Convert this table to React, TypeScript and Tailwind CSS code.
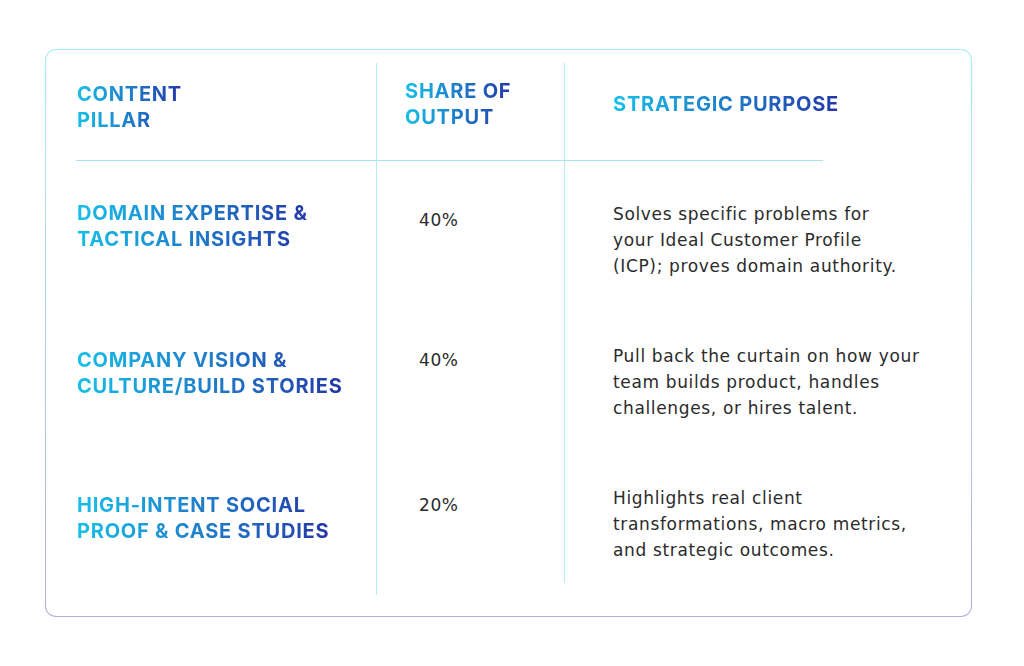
import React from "react";

const rows = [
  {
    pillar: ["DOMAIN EXPERTISE &", "TACTICAL INSIGHTS"],
    share: "40%",
    purpose: ["Solves specific problems for", "your Ideal Customer Profile", "(ICP); proves domain authority."],
  },
  {
    pillar: ["COMPANY VISION &", "CULTURE/BUILD STORIES"],
    share: "40%",
    purpose: ["Pull back the curtain on how your", "team builds product, handles", "challenges, or hires talent."],
  },
  {
    pillar: ["HIGH-INTENT SOCIAL", "PROOF & CASE STUDIES"],
    share: "20%",
    purpose: ["Highlights real client", "transformations, macro metrics,", "and strategic outcomes."],
  },
];

const body = { fontFamily: "'DejaVu Sans', 'Noto Sans', sans-serif" };

function Grad({ lines }: { lines: string[] }) {
  return (
    <span className="inline-block bg-gradient-to-r from-[#17c0e8] to-[#2436a8] bg-clip-text text-transparent font-bold text-[20px] leading-[26px] tracking-[0.78px]">
      {lines.map((l, i) => (
        <span key={i} className="block whitespace-nowrap">
          {l}
        </span>
      ))}
    </span>
  );
}

export default function App() {
  const font = { fontFamily: "Inter, 'Noto Sans', sans-serif" };
  return (
    <div className="w-[1024px] h-[666px] bg-white pt-[49px] pl-[45px]" style={font}>
      <div className="w-[927px] h-[568px] rounded-[11px] p-px bg-gradient-to-b from-[#a6eef8] to-[#b3ade3]">
        <div className="w-full h-full rounded-[10px] bg-white pt-[13px] flex">
          {/* Column 1 */}
          <div className="ml-[30px] w-[300px]">
            <div className="h-[98px] border-b border-[#a5e6f2] pt-[18px] pl-px">
              <Grad lines={["CONTENT", "PILLAR"]} />
            </div>
            {rows.map((r, i) => (
              <div key={i} className={`h-[146px] pl-px ${i === 0 ? "pt-[39px]" : i === 1 ? "pt-[40px]" : "pt-[39px]"}`}>
                <Grad lines={r.pillar} />
              </div>
            ))}
          </div>
          {/* Column 2 */}
          <div className="w-[188px] h-[532px] border-l border-[#b5ecf5]">
            <div className="h-[98px] border-b border-[#a5e6f2] pt-[15px] pl-[28px]">
              <Grad lines={["SHARE OF", "OUTPUT"]} />
            </div>
            {rows.map((r, i) => (
              <div
                key={i}
                style={body}
                className={`h-[146px] pl-[42px] text-[17px] leading-[26px] tracking-[0.6px] text-[#2b2b2b] ${i === 0 ? "pt-[46px]" : i === 1 ? "pt-[40px]" : "pt-[39px]"}`}
              >
                {r.share}
              </div>
            ))}
          </div>
          {/* Column 3 */}
          <div className="w-[370px] h-[520px] border-l border-[#b5ecf5]">
            <div className="w-[258px] h-[98px] border-b border-[#a5e6f2] pt-[28px] pl-[48px]">
              <Grad lines={["STRATEGIC PURPOSE"]} />
            </div>
            <div className="pl-[48px]" style={body}>
              {rows.map((r, i) => (
                <div
                  key={i}
                  className={`text-[17px] leading-[26px] tracking-[0.65px] text-[#2b2b2b] ${i === 0 ? "pt-[40px] h-[146px]" : i === 1 ? "pt-[36px] h-[144px]" : "pt-[34px]"}`}
                >
                  {r.purpose.map((p, j) => (
                    <div key={j} className="whitespace-nowrap">
                      {p}
                    </div>
                  ))}
                </div>
              ))}
            </div>
          </div>
        </div>
      </div>
    </div>
  );
}
